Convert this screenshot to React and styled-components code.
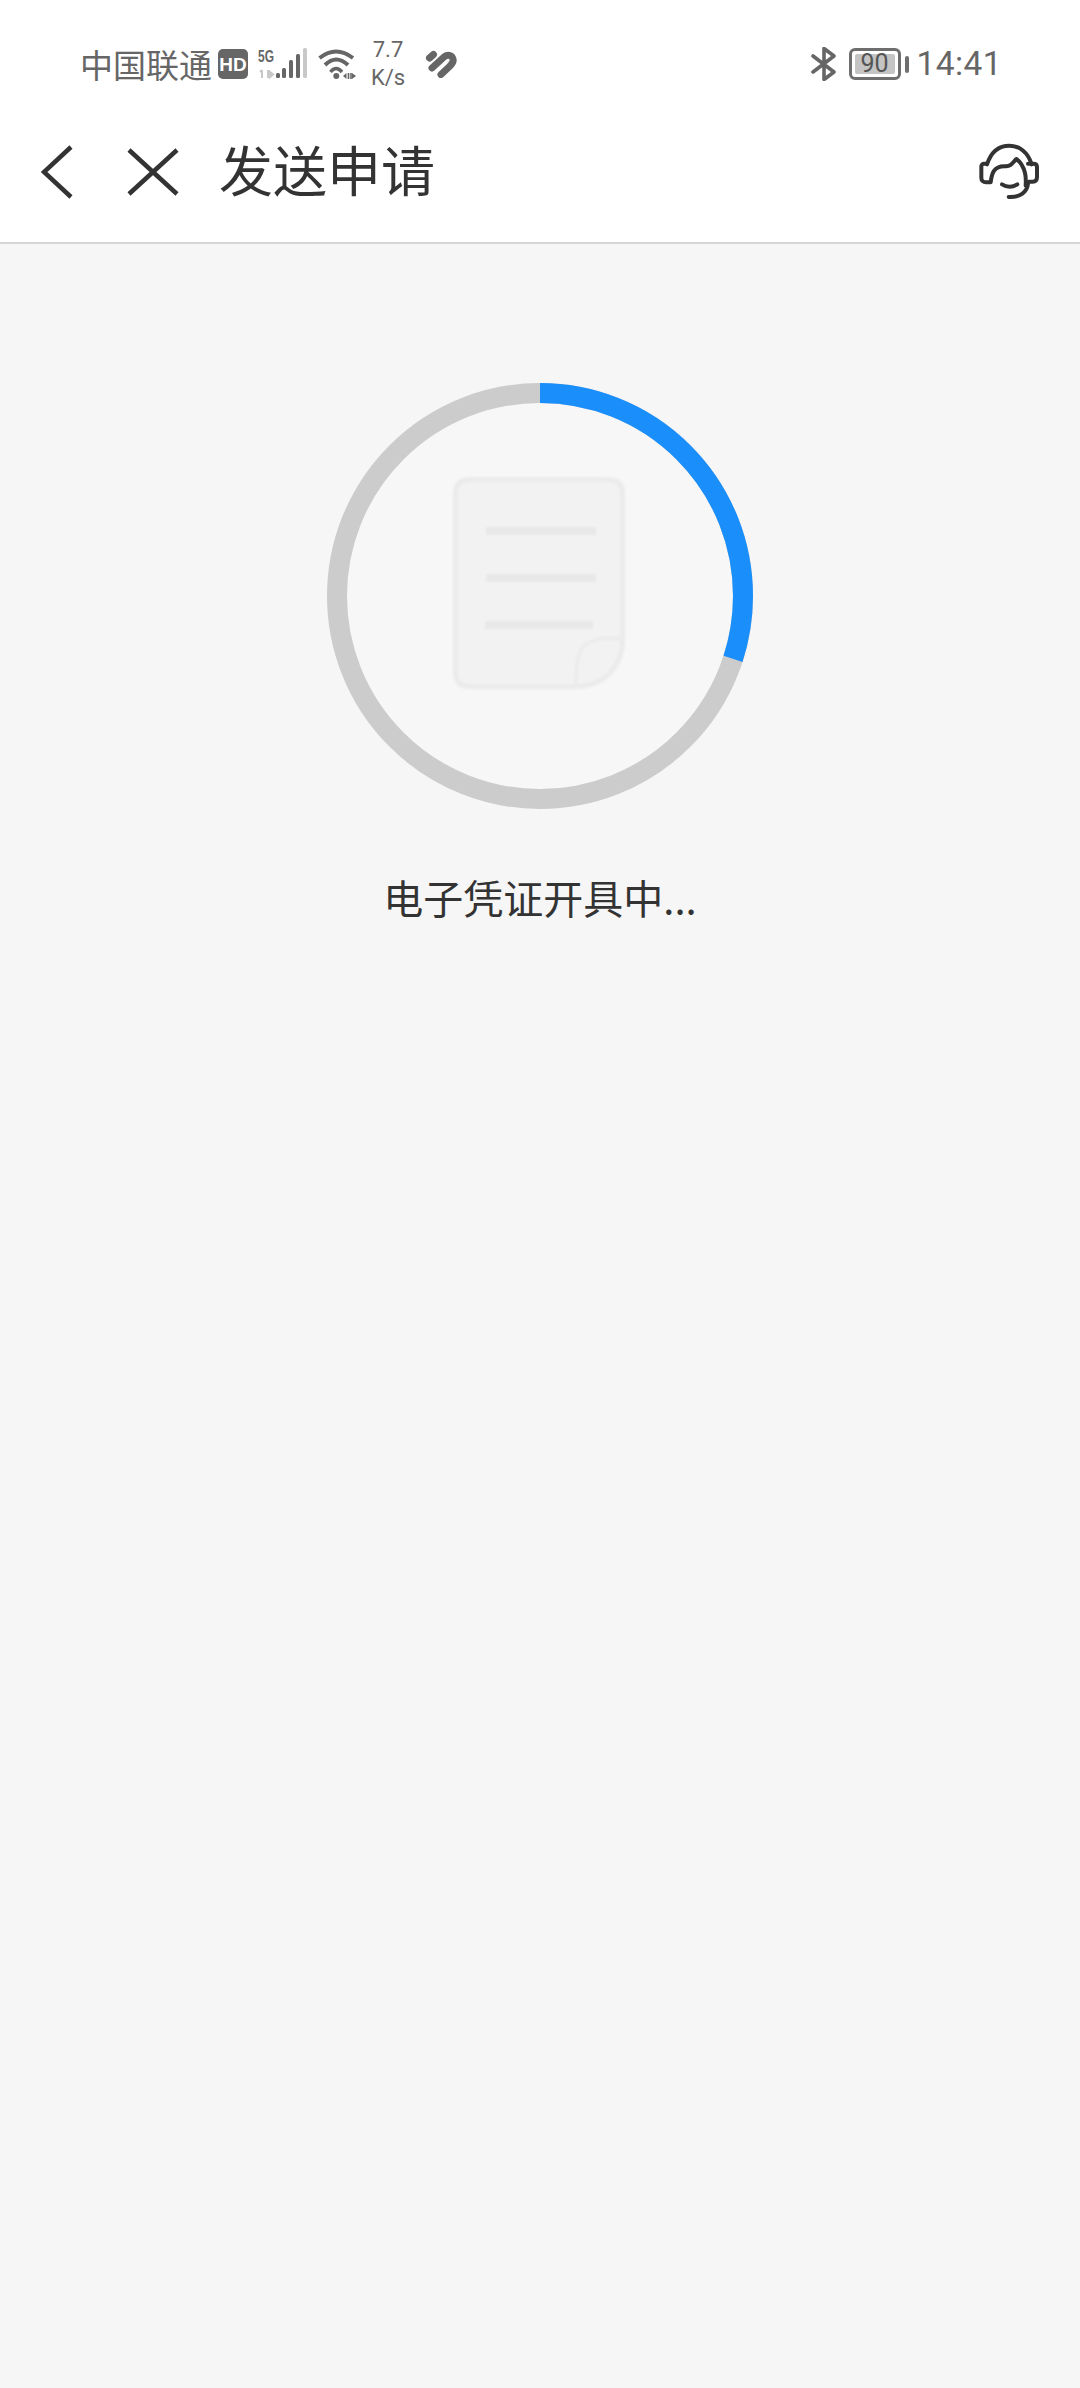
import React from "react";
import styled, { createGlobalStyle } from "styled-components";

const GlobalStyle = createGlobalStyle`
  html, body {
    margin: 0;
    padding: 0;
    background: #f6f6f6;
  }
  * {
    box-sizing: border-box;
  }
`;

const Page = styled.div`
  width: 1080px;
  height: 2388px;
  display: flex;
  flex-direction: column;
  overflow: hidden;
  background: #f6f6f6;
  font-family: "Noto Sans CJK SC", "Liberation Sans", sans-serif;
`;

const Header = styled.header`
  flex: none;
  background: #fff;
  border-bottom: 2px solid #d6d6d6;
`;

const StatusBar = styled.div`
  height: 110px;
  padding: 18px 78px 0 80px;
  display: flex;
  align-items: center;
  justify-content: space-between;
  color: #666;
`;

const StatusGroup = styled.div`
  display: flex;
  align-items: center;
`;

const Carrier = styled.span`
  font-size: 33px;
  line-height: 40px;
  white-space: nowrap;
`;

const StatusIcon = styled.svg`
  display: block;
  flex: none;
  margin-left: ${(p) => p.$left || 0}px;
`;

const Speed = styled.div`
  width: 36px;
  margin-left: 14px;
  display: flex;
  flex-direction: column;
  align-items: center;
  font-family: "Roboto", "Liberation Sans", sans-serif;
  font-size: 22px;
  line-height: 28px;
  white-space: nowrap;
`;

const Battery = styled.div`
  width: 52px;
  height: 32px;
  margin-left: 12px;
  border: 3px solid #6e6e6e;
  border-radius: 6px;
  padding: 3px;
  display: flex;
`;

const BatteryLevel = styled.div`
  flex: 1;
  background: #c4c4c4;
  border-radius: 2px;
  display: flex;
  align-items: center;
  justify-content: center;
  font-family: "Roboto", "Liberation Sans", sans-serif;
  font-size: 25px;
  line-height: 20px;
  color: #555;
`;

const BatteryNub = styled.div`
  width: 4px;
  height: 17px;
  margin-left: 4px;
  background: #6e6e6e;
  border-radius: 2px;
`;

const Clock = styled.span`
  margin-left: 8px;
  font-family: "Roboto", "Liberation Sans", sans-serif;
  font-size: 33.5px;
  font-weight: 400;
  letter-spacing: 0.4px;
  line-height: 40px;
  color: #666;
`;

const NavBar = styled.nav`
  height: 132px;
  padding: 0 37px 8px 41px;
  display: flex;
  align-items: center;
`;

const NavIcon = styled.svg`
  display: block;
  flex: none;
  margin-left: ${(p) => p.$left || 0}px;
`;

const Title = styled.h1`
  margin: 0 0 6px 40px;
  font-size: 54px;
  font-weight: 400;
  line-height: 70px;
  color: #333;
  white-space: nowrap;
`;

const Spacer = styled.div`
  flex: 1;
`;

const Main = styled.main`
  flex: 1;
  padding-top: 138px;
  display: flex;
  flex-direction: column;
  align-items: center;
`;

const Ring = styled.svg`
  display: block;
  width: 428px;
  height: 428px;
`;

const Message = styled.p`
  margin: 59px 0 0;
  font-size: 40px;
  line-height: 56px;
  color: #333;
  white-space: nowrap;
`;

function SignalIcon() {
  return (
    <StatusIcon $left={10} width="50" height="32" viewBox="0 0 50 32">
      <text
        x="0"
        y="14"
        fontFamily="Liberation Sans, sans-serif"
        fontSize="17"
        fontWeight="700"
        fill="#666"
        textLength="16"
        lengthAdjust="spacingAndGlyphs"
      >
        5G
      </text>
      <path d="M4 22v8M2 24l2-2M10 22v8M12 24v5l3-2.5z" fill="#c8c8c8" stroke="#c8c8c8" strokeWidth="2" />
      <rect x="18" y="25" width="4" height="5" rx="1.5" fill="#666" />
      <rect x="24" y="20" width="4" height="10" rx="1.5" fill="#666" />
      <rect x="31" y="12" width="4" height="18" rx="1.5" fill="#666" />
      <rect x="38" y="6" width="4" height="24" rx="1.5" fill="#666" />
      <rect x="45" y="0" width="4" height="30" rx="1.5" fill="#c8c8c8" />
    </StatusIcon>
  );
}

function WifiIcon() {
  return (
    <StatusIcon $left={10} width="38" height="32" viewBox="0 0 38 32">
      <path d="M1.5 10Q18-3 35 10" fill="none" stroke="#666" strokeWidth="4" />
      <path d="M7 17Q18 6 30 17" fill="none" stroke="#666" strokeWidth="4" />
      <path d="M12.5 24Q18 17 24 24" fill="none" stroke="#666" strokeWidth="3.5" />
      <circle cx="18.3" cy="28" r="3" fill="#666" />
      <path d="M25 28l3.5-3v6z" fill="#666" />
      <path d="M30.5 25v6M33 25v6" stroke="#666" strokeWidth="1.6" />
      <path d="M34 25l4 3-4 3z" fill="#666" />
    </StatusIcon>
  );
}

function HeartIcon() {
  return (
    <StatusIcon $left={19} width="32" height="28" viewBox="0 0 32 28">
      <g fill="none" stroke="#666" strokeWidth="7" strokeLinecap="round" strokeLinejoin="round">
        <path d="M4.5 8L8.5 4.5" />
        <path d="M7 18L19 7C22 4 27 5 28 9C29 12 27 14 25 16L16 24.5" />
      </g>
    </StatusIcon>
  );
}

function BluetoothIcon() {
  return (
    <StatusIcon width="26" height="34" viewBox="0 0 26 34">
      <path d="M2 9l21 16-10 7.5V1.5L23 9 2 25" fill="none" stroke="#666" strokeWidth="3.6" strokeLinejoin="round" strokeLinecap="round" />
    </StatusIcon>
  );
}

function HeadsetIcon() {
  return (
    <NavIcon width="66" height="60" viewBox="117 65 198 180">
      <g fill="none" stroke="#333" strokeWidth="12" strokeLinecap="round" strokeLinejoin="round">
        <path d="M147 132C160 92 185 76 214 76c30 0 56 20 67 56" />
        <path d="M146 130h-8c-5 0-8 4-8 8v34c0 9 6 14 14 14h14c3-22 6-50 45-48 16 1 20-10 32-22 14 10 22 26 26 42 3 12 3 22 2 38" />
        <path d="M270 130h16c8 0 11 4 11 10v30c0 9-4 14-13 14h-12" />
        <path d="M192 192c14 9 32 9 46 0" />
        <path d="M270 190c-2 26-26 42-58 40" />
      </g>
    </NavIcon>
  );
}

function DocRing() {
  const r = 203;
  const circumference = 2 * Math.PI * r;
  return (
    <Ring viewBox="0 0 428 428">
      <circle cx="214" cy="214" r="213" fill="#f7f7f7" />
      <circle cx="214" cy="214" r={r} fill="none" stroke="#cccccc" strokeWidth="20" />
      <circle
        cx="214"
        cy="214"
        r={r}
        fill="none"
        stroke="#1a8ffb"
        strokeWidth="20"
        strokeDasharray={`${circumference * 0.3} ${circumference}`}
        transform="rotate(-90 214 214)"
      />
      <g style={{ filter: "blur(1px)" }}>
        <path
          d="M144 97.5h138c10 0 14.5 5 14.5 14V258C296.5 284 278 304.5 250 304.5H144c-10 0-14.5-5-14.5-14v-179c0-9 4.500-14 14.500-14z"
          fill="#f2f2f2"
          stroke="#ebebeb"
          strokeWidth="5"
        />
        <path d="M296 257C280 255 265 257 258 264C251 271 250 285 250 304" fill="none" stroke="#ececec" strokeWidth="4" />
        <rect x="160" y="145" width="110" height="8" fill="#e8e8e8" />
        <rect x="160" y="192" width="110" height="8" fill="#e8e8e8" />
        <rect x="159" y="239" width="108" height="8" fill="#e8e8e8" />
      </g>
    </Ring>
  );
}

export default function App() {
  return (
    <Page>
      <GlobalStyle />
      <Header>
        <StatusBar>
          <StatusGroup>
            <Carrier>中国联通</Carrier>
            <StatusIcon $left={6} width="30" height="30" viewBox="0 0 30 30">
              <rect width="30" height="30" rx="5" fill="#666" />
              <text
                x="15"
                y="21.500"
                textAnchor="middle"
                fontFamily="Liberation Sans, sans-serif"
                fontSize="19"
                fontWeight="700"
                fill="#fff"
              >
                HD
              </text>
            </StatusIcon>
            <SignalIcon />
            <WifiIcon />
            <Speed>
              <span>7.7</span>
              <span>K/s</span>
            </Speed>
            <HeartIcon />
          </StatusGroup>
          <StatusGroup>
            <BluetoothIcon />
            <Battery>
              <BatteryLevel>90</BatteryLevel>
            </Battery>
            <BatteryNub />
            <Clock>14:41</Clock>
          </StatusGroup>
        </StatusBar>
        <NavBar>
          <NavIcon width="32" height="54" viewBox="0 0 32 54">
            <path d="M30 2L3 27l27 25" fill="none" stroke="#333" strokeWidth="4.5" />
          </NavIcon>
          <NavIcon $left={54} width="52" height="48" viewBox="0 0 52 48">
            <path d="M2 2l48 44M50 2L2 46" fill="none" stroke="#333" strokeWidth="4.5" />
          </NavIcon>
          <Title>发送申请</Title>
          <Spacer />
          <HeadsetIcon />
        </NavBar>
      </Header>
      <Main>
        <DocRing />
        <Message>电子凭证开具中...</Message>
      </Main>
    </Page>
  );
}
